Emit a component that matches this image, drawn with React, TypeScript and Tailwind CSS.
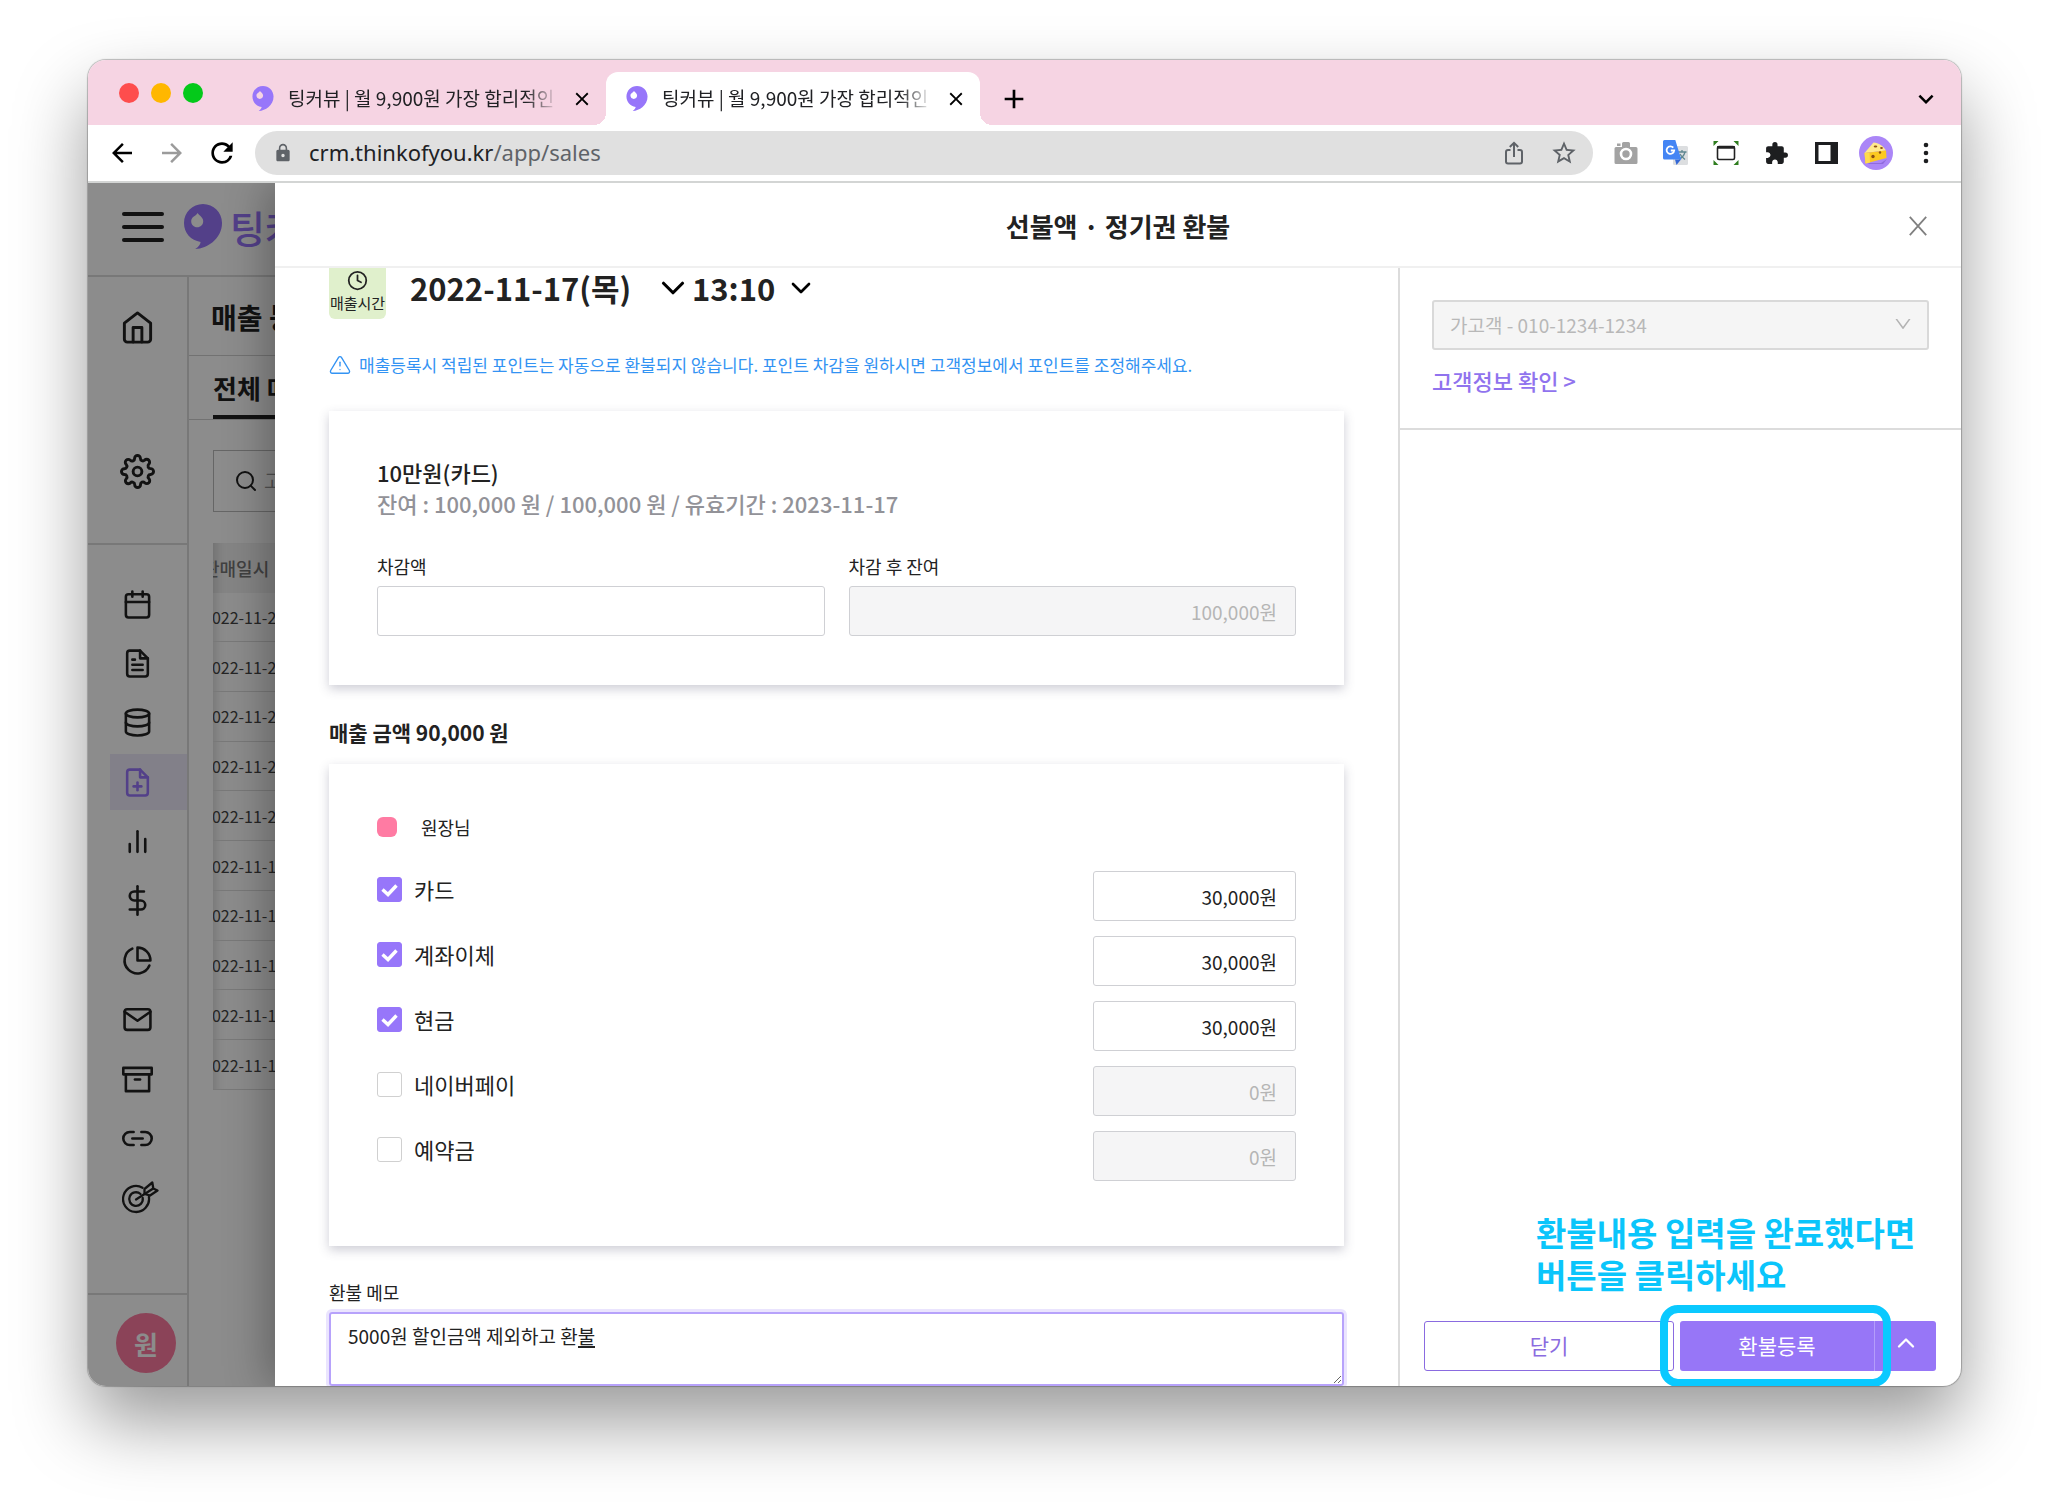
import type { ReactNode } from "react";
import { AiOutlineDown } from "react-icons/ai";
import {
  FiAlertTriangle,
  FiArchive,
  FiBarChart2,
  FiCalendar,
  FiChevronDown,
  FiChevronUp,
  FiClock,
  FiDatabase,
  FiDollarSign,
  FiFilePlus,
  FiFileText,
  FiHome,
  FiLink2,
  FiMail,
  FiPieChart,
  FiSearch,
  FiSettings,
} from "react-icons/fi";
import {
  MdAdd,
  MdArrowBack,
  MdArrowForward,
  MdClose,
  MdExpandMore,
  MdExtension,
  MdLock,
  MdRefresh,
  MdStarBorder,
} from "react-icons/md";

const Logo = ({ className }: { className: string }) => (
  <svg viewBox="0 0 38 45" className={className} fill="currentColor">
    <path
      fillRule="evenodd"
      d="M19 0C29.5 0 38 8.3 38 19c0 8-3.6 14.300-9.400 19.200C24 42 17.500 44.700 11.200 45c3.200-2 5.100-4.400 5.400-7.100C6.900 36.500 0 29 0 19 0 8.300 8.500 0 19 0ZM13.500 9c-1.200 3-6.300 3.600-6.300 8.200 0 3.500 2.700 6 6 6s6-2.500 6-6c0-4-3.600-5.200-5.700-8.200Z"
    />
  </svg>
);

const TargetIcon = () => (
  <svg
    width="37"
    height="33"
    viewBox="0 0 37 33"
    fill="none"
    stroke="currentColor"
    strokeWidth="2.300"
    strokeLinecap="round"
    strokeLinejoin="round"
  >
    <path d="M20.500 6.700A13 13 0 1 0 26.900 16" />
    <path d="M18.500 13a6.800 6.800 0 1 0 2.200 4" />
    <path d="m14 18.500 17.200-11" />
    <path d="M22.500 12.800V8l7.800-6.500 1 6 4.200 2L28 14.500Z" />
  </svg>
);

const ShareIcon = () => (
  <svg
    width="18"
    height="24"
    viewBox="0 0 18 24"
    fill="none"
    stroke="currentColor"
    strokeWidth="2"
  >
    <path d="M5.500 9H3a2 2 0 0 0-2 2v9.500a2 2 0 0 0 2 2h12a2 2 0 0 0 2-2V11a2 2 0 0 0-2-2h-2.500" />
    <path d="M9 16V2M4.800 6 9 1.800 13.200 6" />
  </svg>
);

const CameraIcon = () => (
  <svg width="24" height="22" viewBox="0 0 24 22">
    <path
      fill="#a3a3a3"
      d="M8 3V1.500A1.500 1.500 0 0 1 9.500 0h5A1.500 1.500 0 0 1 16 1.500V5h6a1.500 1.500 0 0 1 1.500 1.500v14A1.500 1.500 0 0 1 22 22H2a1.500 1.500 0 0 1-1.500-1.500v-14A1.500 1.500 0 0 1 2 5h6ZM3 1.500h3.500V4H3Z"
    />
    <circle cx="12" cy="12" r="5" fill="none" stroke="#fff" strokeWidth="2.600" />
  </svg>
);

const TranslateIcon = () => (
  <svg width="26" height="26" viewBox="0 0 26 26">
    <rect x="10" y="6" width="15" height="19" rx="1.500" fill="#dcdee0" />
    <path
      d="M15 12h8.500M19 10v2M22 12c-1 4-3.500 6-6 7.500M17 14c1 2 3 4 5 5.500"
      fill="none"
      stroke="#5f8790"
      strokeWidth="1.300"
    />
    <path fill="#3367d6" d="M12 19.500h6L13.500 25Z" />
    <path
      fill="#4485f4"
      d="M1.500 0h10.800l6 19.500H1.500A1.500 1.500 0 0 1 0 18V1.500A1.500 1.500 0 0 1 1.500 0Z"
    />
    <path
      d="M10.300 7.600A3.800 3.800 0 1 0 11.200 10.500H7.800"
      fill="none"
      stroke="#fff"
      strokeWidth="1.800"
    />
  </svg>
);

const ScreenIcon = () => (
  <svg width="26" height="24" viewBox="0 0 26 24">
    <path
      fill="#2e7d1e"
      d="M.5 0h5L.5 5ZM25.500 0h-5l5 5ZM.5 24h5l-5-5ZM25.500 24h-5l5-5Z"
    />
    <rect
      x="4.500"
      y="5.500"
      width="17"
      height="13"
      rx="1.500"
      fill="#fff"
      stroke="#222"
      strokeWidth="1.600"
    />
    <path d="M4 6.500h18" stroke="#222" strokeWidth="2.600" />
  </svg>
);

const SidePanelIcon = () => (
  <svg width="23" height="22" viewBox="0 0 23 22">
    <path fill="#1d1e20" fillRule="evenodd" d="M0 0h23v22H0ZM3.500 3v16h12V3Z" />
  </svg>
);

const CheeseAvatar = () => (
  <svg width="34" height="34" viewBox="0 0 34 34">
    <circle cx="17" cy="17" r="17" fill="#ab86f7" />
    <path d="M9 27h13l6-4-4 5H10Z" fill="#8f6bdc" />
    <path d="M5.500 17 14.500 6.500c5 .5 10 3.500 12.500 8Z" fill="#ffe98c" />
    <path d="M5.500 17 27 14.500l.5 7.500-21 5.500Z" fill="#fcc921" />
    <path d="m5.500 17 5-.5.5 10-4.500 1Z" fill="#ffdb4d" />
    <g fill="#8a4f14">
      <ellipse cx="16.500" cy="10.500" rx="1.800" ry="1" />
      <ellipse cx="22.500" cy="12" rx="1.400" ry=".9" />
      <circle cx="14" cy="20.500" r="1.700" />
      <circle cx="21" cy="16.500" r="1.200" />
    </g>
  </svg>
);

const DotsIcon = () => (
  <svg width="6" height="22" viewBox="0 0 6 22" fill="#1d1e20">
    <circle cx="3" cy="3" r="2.300" />
    <circle cx="3" cy="11" r="2.300" />
    <circle cx="3" cy="19" r="2.300" />
  </svg>
);

const Tab = ({ active }: { active?: boolean }) => (
  <div
    className={
      active
        ? "relative flex h-[53px] w-[374px] items-center rounded-t-xl bg-white pr-[13px] pl-5"
        : "flex h-[53px] w-[374px] items-center pr-[13px] pl-5"
    }
  >
    {active && (
      <>
        <span className="absolute bottom-0 -left-3 size-3 bg-[radial-gradient(circle_at_0_0,transparent_12px,#fff_12px)]" />
        <span className="absolute -right-3 bottom-0 size-3 bg-[radial-gradient(circle_at_100%_0,transparent_12px,#fff_12px)]" />
      </>
    )}
    <Logo className="h-[25px] w-[22px] text-[#9776fa]" />
    <span className="ml-3.5 w-[270px] overflow-hidden pb-0.5 text-[19px] leading-7 whitespace-nowrap text-[#202124] [mask-image:linear-gradient(to_right,#000_88%,transparent)]">
      팅커뷰 | 월 9,900원 가장 합리적인
    </span>
    <button aria-label="탭 닫기" className="ml-auto">
      <MdClose size={22} />
    </button>
  </div>
);

const ToolButton = (props: { label: string; children: ReactNode }) => (
  <button
    aria-label={props.label}
    className="flex w-[50px] shrink-0 items-center justify-center"
  >
    {props.children}
  </button>
);

const BrowserBar = () => (
  <div>
    <div className="flex h-[65px] items-end bg-[#f6d4e3]">
      <div className="flex h-full items-center gap-3 pl-[31px]">
        <span className="size-5 rounded-full bg-[#fe4d4d]" />
        <span className="size-5 rounded-full bg-[#ffb700]" />
        <span className="size-5 rounded-full bg-[#04c91a]" />
      </div>
      <div className="ml-[29px] flex">
        <Tab />
        <Tab active />
      </div>
      <button aria-label="새 탭" className="ml-[18px] flex h-[53px] items-center">
        <MdAdd size={32} />
      </button>
      <button aria-label="탭 검색" className="mr-5 ml-auto flex h-[53px] items-center">
        <MdExpandMore size={30} />
      </button>
    </div>
    <div className="flex h-[58px] items-center border-b-2 border-[#d3d5d4] bg-white pr-2.5 pl-[9px]">
      <ToolButton label="뒤로">
        <MdArrowBack size={30} />
      </ToolButton>
      <ToolButton label="앞으로">
        <MdArrowForward size={30} className="text-[#9b9b9b]" />
      </ToolButton>
      <ToolButton label="새로고침">
        <MdRefresh size={32} />
      </ToolButton>
      <div className="mx-2 flex h-11 flex-1 items-center rounded-full bg-[#e0e0e0] pr-1 pl-[18px] text-[#5f6368]">
        <MdLock size={20} />
        <a
          href="#sales"
          className="ml-4 flex-1 pb-0.5 font-['Noto_Sans','Noto_Sans_CJK_KR',sans-serif] text-[22px] leading-7"
        >
          <span className="text-[#202124]">crm.thinkofyou.kr</span>/app/sales
        </a>
        <ToolButton label="공유">
          <ShareIcon />
        </ToolButton>
        <ToolButton label="북마크">
          <MdStarBorder size={28} />
        </ToolButton>
      </div>
      <ToolButton label="캡처">
        <CameraIcon />
      </ToolButton>
      <ToolButton label="번역">
        <TranslateIcon />
      </ToolButton>
      <ToolButton label="화면 녹화">
        <ScreenIcon />
      </ToolButton>
      <ToolButton label="확장 프로그램">
        <MdExtension size={25} className="text-[#1d1e20]" />
      </ToolButton>
      <ToolButton label="사이드 패널">
        <SidePanelIcon />
      </ToolButton>
      <ToolButton label="프로필">
        <CheeseAvatar />
      </ToolButton>
      <ToolButton label="메뉴">
        <DotsIcon />
      </ToolButton>
    </div>
  </div>
);

const menu = [
  { label: "예약", icon: <FiCalendar size={31} /> },
  { label: "문서", icon: <FiFileText size={31} /> },
  { label: "상품", icon: <FiDatabase size={31} /> },
  { label: "매출", icon: <FiFilePlus size={31} />, active: true },
  { label: "통계", icon: <FiBarChart2 size={31} /> },
  { label: "정산", icon: <FiDollarSign size={31} /> },
  { label: "분석", icon: <FiPieChart size={31} /> },
  { label: "메시지", icon: <FiMail size={31} /> },
  { label: "보관함", icon: <FiArchive size={31} /> },
  { label: "링크", icon: <FiLink2 size={31} /> },
  { label: "마케팅", icon: <TargetIcon /> },
];

const Sidebar = () => (
  <nav className="flex w-[101px] shrink-0 flex-col border-r-2 border-[#dadada] text-[#222]">
    <div className="flex h-[268px] flex-col items-center gap-[109px] border-b-2 border-[#dadada] pt-[33px]">
      <a href="#home" aria-label="홈">
        <FiHome size={35} />
      </a>
      <a href="#settings" aria-label="설정">
        <FiSettings size={35} />
      </a>
    </div>
    <div className="flex flex-1 flex-col justify-between pt-[31px] pb-[67px] pl-[22px]">
      {menu.map((item) => (
        <a
          key={item.label}
          href="#menu"
          aria-label={item.label}
          className={
            item.active
              ? "flex h-14 items-center bg-[#edeafa] pl-3 text-[#9776fa]"
              : "flex h-14 items-center pl-3"
          }
        >
          {item.icon}
        </a>
      ))}
    </div>
    <div className="h-[93px] border-t-2 border-[#dadada] pt-[18px] pl-7">
      <div className="flex size-[60px] items-center justify-center rounded-full bg-[#fe7aa0] text-[26px] font-bold text-white">
        원
      </div>
    </div>
  </nav>
);

const dates = [
  "2022-11-24",
  "2022-11-23",
  "2022-11-22",
  "2022-11-21",
  "2022-11-20",
  "2022-11-19",
  "2022-11-18",
  "2022-11-17",
  "2022-11-16",
  "2022-11-15",
];

const SalesPage = () => (
  <div className="flex h-full flex-col bg-white">
    <header className="flex h-[94px] shrink-0 items-center border-b-2 border-[#dadada] pb-[5px] pl-[34px]">
      <button aria-label="메뉴 열기" className="flex flex-col gap-[9px]">
        <span className="h-1 w-[42px] rounded-full bg-[#222]" />
        <span className="h-1 w-[42px] rounded-full bg-[#222]" />
        <span className="h-1 w-[42px] rounded-full bg-[#222]" />
      </button>
      <Logo className="ml-5 h-[45px] w-[38px] text-[#9776fa]" />
      <span className="ml-2 text-[38px] leading-none font-medium text-[#9776fa]">
        팅커뷰
      </span>
    </header>
    <div className="flex min-h-0 flex-1">
      <Sidebar />
      <main className="min-w-0 flex-1 text-[#222]">
        <h1 className="h-[79px] border-b border-[#d0d0d0] pt-5 pl-[22px] text-[28px] leading-10 font-bold">
          매출 등록
        </h1>
        <div className="flex h-16 border-b border-[#d0d0d0] pl-6">
          <button className="border-b-4 border-[#222] pt-1 text-[26px] font-bold">
            전체 매출
          </button>
        </div>
        <div className="mt-[30px] ml-6 flex h-[62px] w-[480px] items-center border border-[#bbb] pl-5">
          <FiSearch size={24} />
          <input
            aria-label="고객 검색"
            placeholder="고객명 검색"
            className="ml-1.5 text-[20px] placeholder:text-[#999]"
          />
        </div>
        <div className="mt-[31px] ml-6 overflow-hidden shadow-[inset_12px_0_10px_-8px_rgba(0,0,0,0.15)]">
          <table className="-ml-2.5 h-[547px] w-full text-left text-base whitespace-nowrap">
            <thead>
              <tr className="bg-black/5 text-[#777]">
                <th className="h-[50px] text-[18px] font-medium">판매일시</th>
              </tr>
            </thead>
            <tbody>
              {dates.map((date) => (
                <tr key={date} className="border-b border-[#ddd] text-[#444]">
                  <td>{date}</td>
                </tr>
              ))}
            </tbody>
          </table>
        </div>
      </main>
    </div>
  </div>
);

const payments = [
  { name: "카드", amount: "30,000원", checked: true },
  { name: "계좌이체", amount: "30,000원", checked: true },
  { name: "현금", amount: "30,000원", checked: true },
  { name: "네이버페이", amount: "0원", checked: false },
  { name: "예약금", amount: "0원", checked: false },
];

const PaymentRow = (props: {
  name: string;
  amount: string;
  checked: boolean;
}) => (
  <div className="flex items-start justify-between">
    <label className="flex items-center gap-3 pt-0.5 text-[22px] leading-8">
      <span className="relative size-[25px]">
        <input
          type="checkbox"
          defaultChecked={props.checked}
          className="peer block size-[25px] appearance-none rounded-[3px] border border-[#d0d0d0] bg-white checked:border-[#9776fa] checked:bg-[#9776fa]"
        />
        <svg
          viewBox="0 0 25 25"
          fill="none"
          stroke="#fff"
          strokeWidth="3.400"
          className="pointer-events-none absolute inset-0 hidden peer-checked:block"
        >
          <path d="m5.500 12.500 5.500 5 8.500-9" />
        </svg>
      </span>
      {props.name}
    </label>
    <input
      aria-label={`${props.name} 금액`}
      defaultValue={props.amount}
      disabled={!props.checked}
      className="h-[50px] w-[203px] rounded-[3px] border border-[#cfd0d4] px-[18px] text-right text-[19px] disabled:bg-[#f5f5f6] disabled:text-[#b5b5b5]"
    />
  </div>
);

const RefundForm = () => (
  <section className="flex min-w-0 flex-1 flex-col px-[54px]">
    <div className="flex h-[51px] items-start">
      <div className="flex h-[51px] w-[57px] flex-col items-center rounded-b-md bg-[#e0f0cc] pt-0.5">
        <FiClock size={21} />
        <span className="mt-0.5 text-[15px] leading-5 whitespace-nowrap">매출시간</span>
      </div>
      <label className="ml-6 flex items-center">
        <select
          aria-label="매출 날짜"
          className="w-[244px] appearance-none text-[31px] leading-10 font-bold"
        >
          <option>2022-11-17(목)</option>
        </select>
        <FiChevronDown size={38} className="text-black" />
      </label>
      <label className="flex items-center">
        <select
          aria-label="매출 시간"
          className="w-[93px] appearance-none text-[31px] leading-10 font-bold"
        >
          <option>13:10</option>
        </select>
        <FiChevronDown size={32} className="text-black" />
      </label>
    </div>
    <p className="mt-[34px] flex items-center gap-2 text-[17px] leading-6 text-[#3393f3]">
      <FiAlertTriangle size={22} strokeWidth={1.5} />
      매출등록시 적립된 포인트는 자동으로 환불되지 않습니다. 포인트 차감을 원하시면
      고객정보에서 포인트를 조정해주세요.
    </p>

    <div className="mt-[34px] bg-white px-12 pt-[45px] pb-[49px] shadow-[0_4px_10px_rgba(60,60,90,0.25)]">
      <h3 className="text-[22px] leading-8 font-medium">10만원(카드)</h3>
      <p className="text-[22px] leading-[30px] font-medium text-[#929298]">
        잔여 : 100,000 원 / 100,000 원 / 유효기간 : 2023-11-17
      </p>
      <div className="mt-9 grid grid-cols-2 gap-6">
        <label className="text-[18px] leading-6">
          차감액
          <input className="mt-2 block h-[50px] w-full rounded-[3px] border border-[#cfd0d4] px-[18px] text-right" />
        </label>
        <label className="text-[18px] leading-6">
          차감 후 잔여
          <input
            disabled
            defaultValue="100,000원"
            className="mt-2 block h-[50px] w-full rounded-[3px] border border-[#cfd0d4] bg-[#f5f5f6] px-[18px] text-right text-[19px] text-[#b5b5b5]"
          />
        </label>
      </div>
    </div>

    <h3 className="mt-[31px] text-[21px] leading-8 font-bold">매출 금액 90,000 원</h3>
    <div className="mt-4 bg-white px-12 pt-12 pb-[65px] shadow-[0_4px_10px_rgba(60,60,90,0.25)]">
      <div className="flex h-[30px] items-center gap-6 text-[18px]">
        <span className="size-5 rounded-md bg-[#ff7ba3]" />
        원장님
      </div>
      <div className="mt-[29px] flex flex-col gap-[15px]">
        {payments.map((p) => (
          <PaymentRow key={p.name} {...p} />
        ))}
      </div>
    </div>

    <label htmlFor="memo" className="mt-[34px] text-[18px] leading-6">
      환불 메모
    </label>
    <div className="relative mt-2 flex min-h-[71px] flex-1">
      <textarea
        id="memo"
        defaultValue="5000원 할인금액 제외하고 환불"
        className="flex-1 resize-y rounded-[3px] border-2 border-[#b7a2fb] px-[17px] py-2 text-[19px] leading-7 shadow-[0_0_0_3px_rgba(151,118,250,0.2)] outline-none"
      />
      {/* IME composition underline */}
      <span className="pointer-events-none absolute top-[34px] left-[249px] h-0.5 w-[17px] bg-[#222]" />
    </div>
  </section>
);

const CustomerPanel = () => (
  <aside className="flex w-[563px] shrink-0 flex-col border-l-2 border-[#dcdcdc]">
    <div className="border-b-2 border-[#dcdcdc] px-8 pt-8 pb-[34px]">
      <div className="relative">
        <select
          disabled
          aria-label="고객"
          className="h-[50px] w-full appearance-none rounded-[3px] border-2 border-[#d9d9d9] bg-[#f5f5f5] px-4 text-[19px] text-[#b8b8b8] opacity-100"
        >
          <option>가고객 - 010-1234-1234</option>
        </select>
        <AiOutlineDown size={20} className="absolute top-3.5 right-4 text-[#b3b3b3]" />
      </div>
      <a
        href="#customer"
        className="mt-4 block text-[22px] leading-7 font-medium text-[#9073ee]"
      >
        고객정보 확인 &gt;
      </a>
    </div>
    <div className="mt-auto pr-[25px] pb-[15px] pl-6">
      <p className="pl-28 text-[33px] leading-[42px] font-bold text-[#0ac5fb]">
        환불내용 입력을 완료했다면
        <br />
        버튼을 클릭하세요
      </p>
      <div className="mt-[26px] flex gap-1.5">
        <button className="h-[50px] flex-1 rounded-[3px] border border-[#8a6be0] bg-white text-[21px] text-[#8a6be0]">
          닫기
        </button>
        <div className="relative flex h-[50px] w-[256px] text-white">
          <button className="flex-1 rounded-l-[3px] bg-[#9776f7] text-[21px]">
            환불등록
          </button>
          <button
            aria-label="더보기"
            className="flex w-[62px] items-center justify-center rounded-r-[3px] border-l border-[#b49dfa] bg-[#9776f7] pb-1.5"
          >
            <FiChevronUp size={28} />
          </button>
          <span className="pointer-events-none absolute -inset-y-4 right-[45px] -left-5 rounded-[18px] border-8 border-[#0ac9ff]" />
        </div>
      </div>
    </div>
  </aside>
);

const RefundDrawer = () => (
  <div
    role="dialog"
    aria-labelledby="drawer-title"
    className="absolute inset-y-0 right-0 left-[187px] flex flex-col bg-white text-[#222] shadow-[-8px_0_40px_rgba(0,0,0,0.3)]"
  >
    <header className="grid h-[85px] shrink-0 grid-cols-[1fr_auto_1fr] items-center border-b-2 border-[#f0f0f0] pt-0.5">
      <h2 id="drawer-title" className="col-start-2 text-[26px] leading-10 font-bold">
        선불액 · 정기권 환불
      </h2>
      <button aria-label="닫기" className="mr-[34px] justify-self-end">
        <svg width="18" height="20" viewBox="0 0 18 20" stroke="#808080" strokeWidth="1.800">
          <path d="m.8.800 16.400 18.400M17.200.800.800 19.200" />
        </svg>
      </button>
    </header>
    <div className="flex min-h-0 flex-1">
      <RefundForm />
      <CustomerPanel />
    </div>
  </div>
);

export default function App() {
  return (
    <div className="flex h-screen flex-col bg-white pt-[60px] pr-[87px] pb-[116px] pl-[88px] font-['Noto_Sans_CJK_KR',sans-serif]">
      <div className="flex min-h-0 flex-1 flex-col overflow-hidden rounded-[18px] shadow-[0_0_1px_1px_rgba(0,0,0,0.25),0_36px_72px_rgba(0,0,0,0.4)]">
        <BrowserBar />
        <div className="relative min-h-0 flex-1 overflow-hidden">
          <SalesPage />
          <div className="absolute inset-0 bg-black/45" />
          <RefundDrawer />
        </div>
      </div>
    </div>
  );
}
